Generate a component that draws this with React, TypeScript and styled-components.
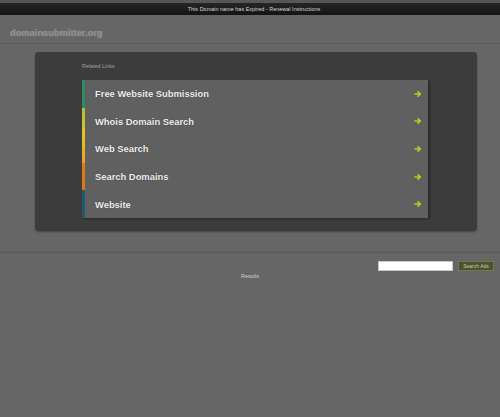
import React from "react";
import styled, { createGlobalStyle } from "styled-components";

const Global = createGlobalStyle`
  html, body { margin: 0; padding: 0; background: #666666; }
  body { font-family: "Liberation Sans", Arial, sans-serif; width: 500px; height: 417px; overflow: hidden; }
`;

const Page = styled.div`
  width: 500px;
  min-height: 417px;
  background: #666666;
  display: flex;
  flex-direction: column;
`;

const TopBar = styled.div`
  height: 15px;
  box-sizing: border-box;
  border-top: 3px solid #575757;
  background: linear-gradient(#262626, #141414);
  display: flex;
  align-items: center;
  justify-content: center;
  padding-left: 8px;
  font-size: 5.4px;
  color: #d8d8d8;
  letter-spacing: 0.05px;
`;

const Header = styled.div`
  height: 29px;
  display: flex;
  align-items: center;
  padding: 8px 0 0 10px;
  box-sizing: border-box;
  border-bottom: 1px solid #5c5c5c;
`;

const Domain = styled.div`
  font-weight: bold;
  font-size: 9.3px;
  color: #8c8c8c;
  text-shadow: 0 0 1px #9a9a9a;
`;

const Main = styled.div`
  padding: 8px 23px 0 35px;
`;

const Panel = styled.div`
  background: #3c3c3c;
  border-radius: 4px;
  box-shadow: 0 1px 2px rgba(0, 0, 0, 0.35);
  padding: 11px 49px 13px 47px;
  display: flex;
  flex-direction: column;
`;

const Label = styled.div`
  font-size: 5.4px;
  line-height: 6px;
  color: #a0a0a0;
  margin-bottom: 11px;
`;

const List = styled.div`
  display: flex;
  flex-direction: column;
  box-shadow: 2px 1px 2px rgba(0, 0, 0, 0.3);
`;

const Row = styled.div<{ $edge: string }>`
  height: 27.6px;
  display: flex;
  align-items: center;
  justify-content: space-between;
  background: #606060;
  border-left: 3px solid transparent;
  border-image: ${(p) => p.$edge} 1;
  padding: 0 6px 0 10px;
`;

const RowText = styled.span`
  font-weight: bold;
  font-size: 9.4px;
  color: #f0f0f0;
  text-shadow: 0 0 1px rgba(0, 0, 0, 0.5);
`;

const Arrow = () => (
  <svg width="8" height="8" viewBox="0 0 8 8">
    <path d="M1 4 H6 M4 1.8 L6.4 4 L4 6.2" stroke="#a8d41c" strokeWidth="1.6" fill="none" strokeLinecap="round" strokeLinejoin="round" />
  </svg>
);

const Band = styled.div`
  margin-top: 19px;
  height: 3px;
  background: linear-gradient(#6c6c6c, #555555);
`;

const SearchRow = styled.div`
  display: flex;
  justify-content: flex-end;
  align-items: center;
  gap: 5px;
  padding: 8px 6px 0 0;
`;

const Input = styled.div`
  width: 75px;
  height: 10px;
  box-sizing: border-box;
  background: #ffffff;
  border: 1px solid #c8c8c8;
`;

const Button = styled.div`
  width: 36px;
  height: 10px;
  box-sizing: border-box;
  background: #4b5332;
  border: 1px solid #6f7a45;
  color: #c9d0a8;
  font-size: 5px;
  display: flex;
  align-items: center;
  justify-content: center;
`;

const Results = styled.div`
  text-align: center;
  font-size: 5.4px;
  color: #d0d0d0;
  padding: 2px 0 0 0;
`;

const links = [
  { t: "Free Website Submission", e: "linear-gradient(#2f8a68, #2f8a68)" },
  { t: "Whois Domain Search", e: "linear-gradient(#a8c03a, #e2c820)" },
  { t: "Web Search", e: "linear-gradient(#e6c820, #e8a020)" },
  { t: "Search Domains", e: "linear-gradient(#e07c14, #e07414)" },
  { t: "Website", e: "linear-gradient(#1d5b70, #1d5b70)" },
];

export default function App() {
  return (
    <Page>
      <Global />
      <TopBar>This Domain name has Expired - Renewal Instructions</TopBar>
      <Header>
        <Domain>domainsubmitter.org</Domain>
      </Header>
      <Main>
        <Panel>
          <Label>Related Links</Label>
          <List>
            {links.map((l) => (
              <Row key={l.t} $edge={l.e}>
                <RowText>{l.t}</RowText>
                <Arrow />
              </Row>
            ))}
          </List>
        </Panel>
      </Main>
      <Band />
      <SearchRow>
        <Input />
        <Button>Search Ads</Button>
      </SearchRow>
      <Results>Results</Results>
    </Page>
  );
}
